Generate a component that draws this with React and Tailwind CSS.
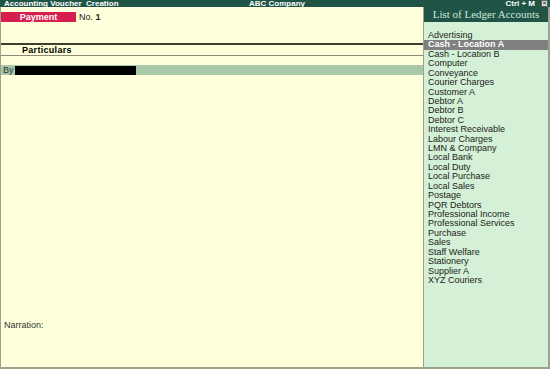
import React from 'react'

const ledgers = [
  'Advertising',
  'Cash - Location A',
  'Cash - Location B',
  'Computer',
  'Conveyance',
  'Courier Charges',
  'Customer A',
  'Debtor A',
  'Debtor B',
  'Debtor C',
  'Interest Receivable',
  'Labour Charges',
  'LMN & Company',
  'Local Bank',
  'Local Duty',
  'Local Purchase',
  'Local Sales',
  'Postage',
  'PQR Debtors',
  'Professional Income',
  'Professional Services',
  'Purchase',
  'Sales',
  'Staff Welfare',
  'Stationery',
  'Supplier A',
  'XYZ Couriers'
]

export default function App() {
  return (
    <div className="w-[550px] h-[369px] flex flex-col bg-[#ffffdc] font-['Liberation_Sans',sans-serif] overflow-hidden">
      {/* title bar */}
      <div className="h-[7px] bg-[#1f5447] flex items-center text-white font-bold text-[8px] leading-none">
        <span className="flex-1 pl-[4px] whitespace-pre">Accounting Voucher  Creation</span>
        <span>ABC Company</span>
        <div className="flex-1 flex justify-end items-center">
          <span className="pr-[6px]">Ctrl + M</span>
          <span className="w-[7px] h-[7px] mr-[2px] bg-[#d8d8d8] border border-[#606060] text-[#303030] text-[6px] leading-[5px] text-center">×</span>
        </div>
      </div>

      <div className="flex-1 flex min-h-0">
        {/* voucher area */}
        <div className="flex-1 flex flex-col border-l border-b-2 border-[#a0a08c] text-[9px] leading-[10px] text-[#222]">
          <div className="mt-[5px] flex items-center h-[10px]">
            <div className="w-[75px] h-[10px] bg-[#d61f4e] text-white font-bold text-center leading-[10px]">Payment</div>
            <span className="ml-[3px]">No. <b>1</b></span>
          </div>

          <div className="mt-[21px] border-t-2 border-b border-t-[#3e3e30] border-b-[#8c8c78] h-[13px] flex items-center">
            <span className="ml-[21px] font-bold tracking-[0.3px] text-black">Particulars</span>
          </div>

          <div className="mt-[9px] h-[10px] bg-[#a7c9a7] flex items-center">
            <span className="pl-[2px] w-[14px] text-[#333]">By</span>
            <div className="w-[121px] h-[9px] bg-black"></div>
          </div>

          <div className="flex-1"></div>
          <div className="pl-[3px] mb-[37px] text-[#333]">Narration:</div>
        </div>

        {/* ledger list */}
        <div className="w-[127px] flex flex-col bg-[#d4f0d6] border-l border-r-2 border-b-2 border-[#a0a08c]">
          <div className="h-[15px] bg-[#1f5447] text-[#cfe6dc] text-center font-['Liberation_Serif',serif] text-[11px] leading-[15px]">
            List of Ledger Accounts
          </div>
          <div className="pt-[9px] text-[9px] leading-[9.42px] text-[#222]">
            {ledgers.map((name, i) => (
              <div
                key={name}
                className={i === 1 ? 'pl-[4px] bg-[#808080] text-white font-bold' : 'pl-[4px]'}
              >
                {name}
              </div>
            ))}
          </div>
        </div>
      </div>
    </div>
  )
}
